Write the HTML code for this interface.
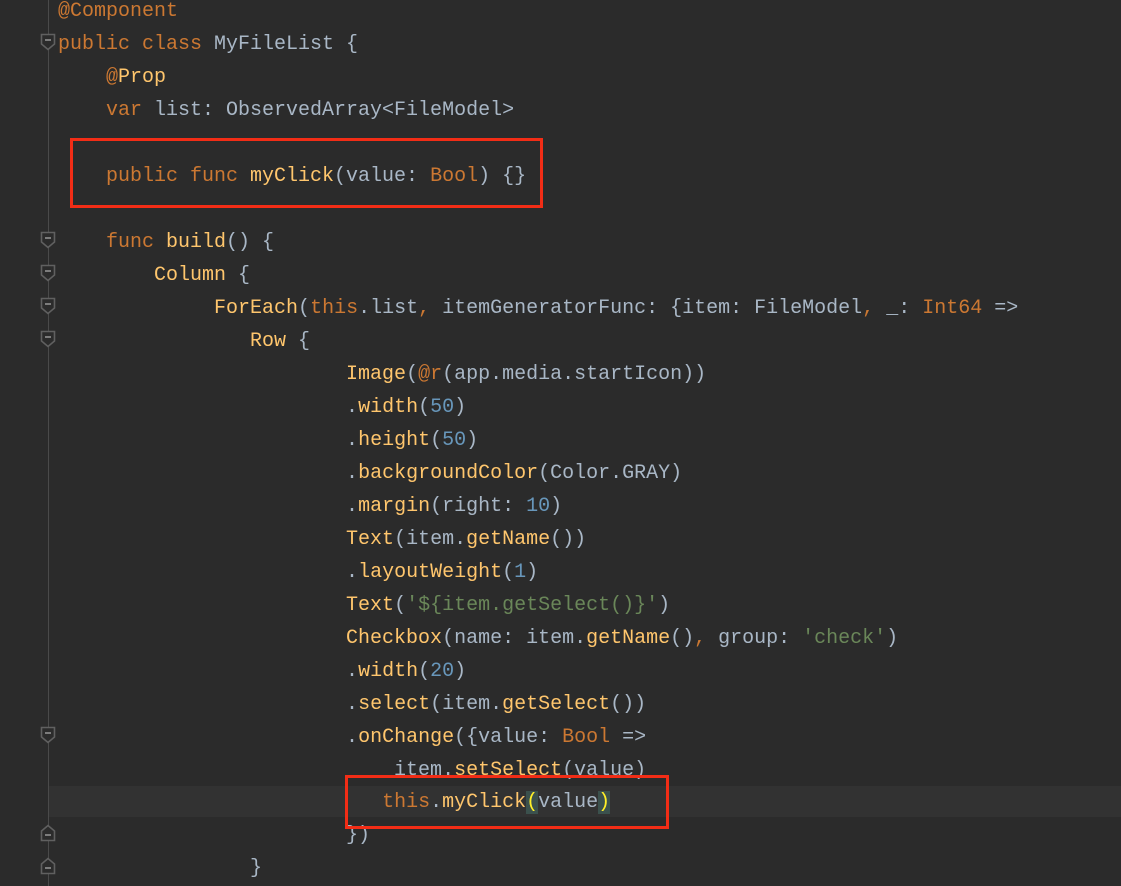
<!DOCTYPE html>
<html><head><meta charset="utf-8"><style>
html,body{margin:0;padding:0;width:1121px;height:886px;background:#2b2b2b;overflow:hidden;position:relative}
.l{position:absolute;left:58px;height:33px;line-height:33px;font-family:"Liberation Mono",monospace;font-size:20px;color:#a9b7c6;white-space:pre}
.k{color:#cc7832}.f{color:#ffc66d}.n{color:#6897bb}.s{color:#6a8759}.a{color:#bbb529}
.g{position:absolute;left:48px;top:0;width:1px;height:886px;background:#4a4a4a}
.cur{position:absolute;left:49px;top:786px;width:1072px;height:31px;background:#323232}
.fm{position:absolute;left:40px;width:16px;height:18px}
.box{position:absolute;border:3px solid #f22d16;box-sizing:border-box}
.b{background:#3b514d;color:#ffef28}
</style></head><body>
<div class="g"></div>
<div class="cur"></div>
<div class="l" style="top:-5px"><span class="k">@Component</span></div>
<div class="l" style="top:28px"><span class="k">public class </span>MyFileList {</div>
<div class="l" style="top:61px"><span class="k">    @</span><span class="f">Prop</span></div>
<div class="l" style="top:94px"><span class="k">    var </span>list: ObservedArray&lt;FileModel&gt;</div>
<div class="l" style="top:160px"><span class="k">    public func </span><span class="f">myClick</span>(value: <span class="k">Bool</span>) {}</div>
<div class="l" style="top:226px"><span class="k">    func </span><span class="f">build</span>() {</div>
<div class="l" style="top:259px">        <span class="f">Column</span> {</div>
<div class="l" style="top:292px">             <span class="f">ForEach</span>(<span class="k">this</span>.list<span class="k">,</span> itemGeneratorFunc: {item: FileModel<span class="k">,</span> _: <span class="k">Int64</span> =&gt;</div>
<div class="l" style="top:325px">                <span class="f">Row</span> {</div>
<div class="l" style="top:358px">                        <span class="f">Image</span>(<span class="k">@r</span>(app.media.startIcon))</div>
<div class="l" style="top:391px">                        .<span class="f">width</span>(<span class="n">50</span>)</div>
<div class="l" style="top:424px">                        .<span class="f">height</span>(<span class="n">50</span>)</div>
<div class="l" style="top:457px">                        .<span class="f">backgroundColor</span>(Color.GRAY)</div>
<div class="l" style="top:490px">                        .<span class="f">margin</span>(right: <span class="n">10</span>)</div>
<div class="l" style="top:523px">                        <span class="f">Text</span>(item.<span class="f">getName</span>())</div>
<div class="l" style="top:556px">                        .<span class="f">layoutWeight</span>(<span class="n">1</span>)</div>
<div class="l" style="top:589px">                        <span class="f">Text</span>(<span class="s">'${item.getSelect()}'</span>)</div>
<div class="l" style="top:622px">                        <span class="f">Checkbox</span>(name: item.<span class="f">getName</span>()<span class="k">,</span> group: <span class="s">'check'</span>)</div>
<div class="l" style="top:655px">                        .<span class="f">width</span>(<span class="n">20</span>)</div>
<div class="l" style="top:688px">                        .<span class="f">select</span>(item.<span class="f">getSelect</span>())</div>
<div class="l" style="top:721px">                        .<span class="f">onChange</span>({value: <span class="k">Bool</span> =&gt;</div>
<div class="l" style="top:754px">                            item.<span class="f">setSelect</span>(value)</div>
<div class="l" style="top:786px">                           <span class="k">this</span>.<span class="f">myClick</span><span class="b">(</span>value<span class="b">)</span></div>
<div class="l" style="top:819px">                        })</div>
<div class="l" style="top:852px">                }</div>
<svg class="fm" style="top:33px" viewBox="0 0 16 18"><path d="M1.5 1.5H14.5V11L8 16.5L1.5 11Z" fill="#2b2b2b" stroke="#606060" stroke-width="1.6"/><path d="M5 7H11" stroke="#909090" stroke-width="1.6"/></svg>
<svg class="fm" style="top:231px" viewBox="0 0 16 18"><path d="M1.5 1.5H14.5V11L8 16.5L1.5 11Z" fill="#2b2b2b" stroke="#606060" stroke-width="1.6"/><path d="M5 7H11" stroke="#909090" stroke-width="1.6"/></svg>
<svg class="fm" style="top:264px" viewBox="0 0 16 18"><path d="M1.5 1.5H14.5V11L8 16.5L1.5 11Z" fill="#2b2b2b" stroke="#606060" stroke-width="1.6"/><path d="M5 7H11" stroke="#909090" stroke-width="1.6"/></svg>
<svg class="fm" style="top:297px" viewBox="0 0 16 18"><path d="M1.5 1.5H14.5V11L8 16.5L1.5 11Z" fill="#2b2b2b" stroke="#606060" stroke-width="1.6"/><path d="M5 7H11" stroke="#909090" stroke-width="1.6"/></svg>
<svg class="fm" style="top:330px" viewBox="0 0 16 18"><path d="M1.5 1.5H14.5V11L8 16.5L1.5 11Z" fill="#2b2b2b" stroke="#606060" stroke-width="1.6"/><path d="M5 7H11" stroke="#909090" stroke-width="1.6"/></svg>
<svg class="fm" style="top:726px" viewBox="0 0 16 18"><path d="M1.5 1.5H14.5V11L8 16.5L1.5 11Z" fill="#2b2b2b" stroke="#606060" stroke-width="1.6"/><path d="M5 7H11" stroke="#909090" stroke-width="1.6"/></svg>
<svg class="fm" style="top:824px" viewBox="0 0 16 18"><path d="M1.5 16.5H14.5V7L8 1.5L1.5 7Z" fill="#2b2b2b" stroke="#606060" stroke-width="1.6"/><path d="M5 11H11" stroke="#909090" stroke-width="1.6"/></svg>
<svg class="fm" style="top:857px" viewBox="0 0 16 18"><path d="M1.5 16.5H14.5V7L8 1.5L1.5 7Z" fill="#2b2b2b" stroke="#606060" stroke-width="1.6"/><path d="M5 11H11" stroke="#909090" stroke-width="1.6"/></svg>
<div class="box" style="left:70px;top:138px;width:473px;height:70px"></div>
<div class="box" style="left:345px;top:775px;width:324px;height:54px"></div>
</body></html>
